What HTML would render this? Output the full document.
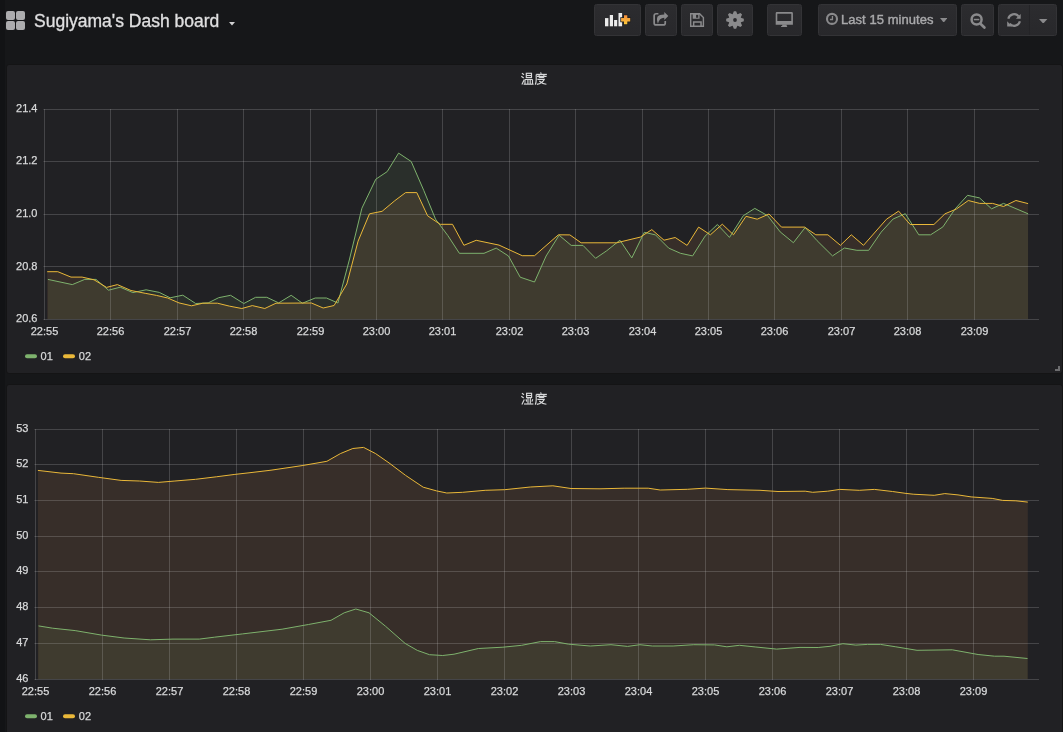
<!DOCTYPE html>
<html><head><meta charset="utf-8"><title>Sugiyama's Dash board</title>
<style>
html,body{margin:0;padding:0;}
body{width:1063px;height:732px;overflow:hidden;position:relative;background:#161719;font-family:"Liberation Sans",sans-serif;}
.strip{position:absolute;left:0;top:0;width:5px;height:732px;background:#121315;}
.panel{position:absolute;left:6px;width:1055px;background:#212124;border:1px solid #141415;border-radius:3px;}
.btn{position:absolute;top:4px;height:30px;background:linear-gradient(#2c2c2f,#28282b);border:1px solid #333336;border-radius:2.5px;box-sizing:content-box;}
.title{position:absolute;left:34.3px;top:9.1px;font-size:17.5px;color:#e0e0e1;line-height:24px;white-space:nowrap;-webkit-text-stroke:0.3px #e0e0e1;will-change:transform;}
.tp{position:absolute;left:22px;top:6.5px;font-size:13px;color:#a9a9ab;line-height:16px;white-space:nowrap;-webkit-text-stroke:0.4px #a9a9ab;letter-spacing:0.05px;will-change:transform;}
</style></head><body>
<div class="strip"></div>
<svg width="20" height="20" style="position:absolute;left:6px;top:11px">
<rect x="0" y="0" width="9" height="9" rx="2" fill="#acacae"/>
<rect x="10" y="0" width="9" height="9" rx="2" fill="#acacae"/>
<rect x="0" y="10" width="9" height="9" rx="2" fill="#acacae"/>
<rect x="10" y="10" width="9" height="9" rx="2" fill="#acacae"/>
</svg>
<div class="title">Sugiyama's Dash board</div>
<svg width="6" height="3.6" style="position:absolute;left:229.2px;top:22px"><path d="M0,0 H6 L3.0,3.6 Z" fill="#d0d0d2"/></svg>
<div class="btn" style="left:594px;width:45px;"><svg width="47" height="32" style="position:absolute;left:0;top:0">
<defs><linearGradient id="og" x1="0" y1="0" x2="0" y2="1"><stop offset="0" stop-color="#f38b3b"/><stop offset="1" stop-color="#fbc93a"/></linearGradient></defs>
<rect x="10" y="13.1" width="3.4" height="8.2" fill="#ececec"/>
<rect x="14.8" y="10" width="3.2" height="11.3" fill="#ececec"/>
<rect x="19.1" y="15" width="3.1" height="6.3" fill="#ececec"/>
<rect x="23.5" y="8" width="3.6" height="13.3" fill="#ececec"/>
<path d="M25.3,12.3 h2.9 v-2.9 h4.9 v2.9 h2.9 v4.9 h-2.9 v2.9 h-4.9 v-2.9 h-2.9z" fill="#1f1f21"/>
<path d="M26.1,13.1 h2.9 v-2.9 h3.3 v2.9 h2.9 v3.3 h-2.9 v2.9 h-3.3 v-2.9 h-2.9z" fill="url(#og)"/>
</svg></div>
<div class="btn" style="left:645px;width:30px;"><svg width="32" height="32" style="position:absolute;left:0;top:0">
<path d="M12.4,8.75 H10.2 Q8.15,8.75 8.15,10.8 V17.9 Q8.15,19.95 10.2,19.95 H17.2 Q19.25,19.95 19.25,17.9 V15.9" fill="none" stroke="#8a8a8c" stroke-width="1.7"/>
<path d="M18.3,7.1 L22.3,11.1 L18.3,14.9 V12.7 Q13.4,12.6 11.9,18.7 Q10.2,14.2 11.6,11.6 Q13.2,9.6 18.3,9.6 Z" fill="#8a8a8c"/>
</svg></div>
<div class="btn" style="left:681px;width:30px;"><svg width="32" height="32" style="position:absolute;left:0;top:0">
<path d="M8.7,8.7 H17.6 L21.4,12.5 V21.2 H8.7 Z" fill="none" stroke="#8a8a8c" stroke-width="1.4"/>
<path d="M10.7,9.1 H17.6 V13.7 H10.7 Z M14.1,9.8 V12.7 H16.2 V9.8 Z" fill="#8a8a8c" fill-rule="evenodd"/>
<path d="M11.65,21 V16.95 H19.05 V21" fill="none" stroke="#8a8a8c" stroke-width="1.5"/>
</svg></div>
<div class="btn" style="left:717px;width:34px;"><svg width="36" height="32" style="position:absolute;left:0;top:0">
<path d="M14.75,9.01 L15.85,6.18 L18.15,6.18 L19.25,9.01 L19.64,9.17 L22.42,7.94 L24.06,9.58 L22.83,12.36 L22.99,12.75 L25.82,13.85 L25.82,16.15 L22.99,17.25 L22.83,17.64 L24.06,20.42 L22.42,22.06 L19.64,20.83 L19.25,20.99 L18.15,23.82 L15.85,23.82 L14.75,20.99 L14.36,20.83 L11.58,22.06 L9.94,20.42 L11.17,17.64 L11.01,17.25 L8.18,16.15 L8.18,13.85 L11.01,12.75 L11.17,12.36 L9.94,9.58 L11.58,7.94 L14.36,9.17 Z" fill="#8a8a8c"/>
<circle cx="17.0" cy="15.0" r="1.9" fill="#2b2b2e"/>
</svg></div>
<div class="btn" style="left:767px;width:33px;"><svg width="35" height="32" style="position:absolute;left:0;top:0">
<path d="M7.7,8.2 Q7.7,7 8.9,7 H23.7 Q24.9,7 24.9,8.2 V19.75 H7.7 Z M9.3,8.7 V16 H23.3 V8.7 Z" fill="#8a8a8c" fill-rule="evenodd"/>
<rect x="14.2" y="19.5" width="4.5" height="1.6" fill="#8a8a8c"/>
<rect x="13" y="21" width="6.2" height="1.1" rx="0.4" fill="#8a8a8c"/>
</svg></div>
<div class="btn" style="left:818px;width:137px;"><svg width="20" height="30" style="position:absolute;left:0;top:0">
<circle cx="13" cy="13.9" r="5" fill="none" stroke="#8a8a8c" stroke-width="2.1"/>
<path d="M13.45,11.1 V14.5 H10.9" fill="none" stroke="#8a8a8c" stroke-width="1.3"/>
</svg><div class="tp">Last 15 minutes</div><svg width="7.4" height="4.6" style="position:absolute;left:121px;top:12.5px"><path d="M0,0 H7.4 L3.7,4.6 Z" fill="#8a8a8c"/></svg></div>
<div class="btn" style="left:961px;width:31px;"><svg width="33" height="32" style="position:absolute;left:0;top:0">
<circle cx="14.6" cy="14.5" r="5.0" fill="none" stroke="#8a8a8c" stroke-width="2.5"/>
<rect x="11.8" y="13.8" width="5.5" height="1.5" fill="#8a8a8c"/>
<path d="M19,19.3 L22.4,22.5" stroke="#8a8a8c" stroke-width="2.7" stroke-linecap="round"/>
</svg></div>
<div class="btn" style="left:998px;width:57px;"><svg width="31" height="32" style="position:absolute;left:0;top:0">
<path d="M9.3,13.7 A5.9,5.9 0 0 1 19.6,11.4" fill="none" stroke="#8a8a8c" stroke-width="2.2"/>
<path d="M21.7,8.9 V13.7 H16.9 Z" fill="#8a8a8c"/>
<path d="M20.9,16.2 A5.9,5.9 0 0 1 10.6,18.6" fill="none" stroke="#8a8a8c" stroke-width="2.2"/>
<path d="M8.2,16.2 V21.4 H13 Z" fill="#8a8a8c"/>
</svg><div style="position:absolute;left:30px;top:0;width:1px;height:30px;background:#242427"></div><svg width="8.4" height="4.6" style="position:absolute;left:40.3px;top:13.6px"><path d="M0,0 H8.4 L4.2,4.6 Z" fill="#8a8a8c"/></svg></div>
<div class="panel" style="top:64px;height:308px;"></div>
<div class="panel" style="top:384px;height:400px;"></div>
<svg width="1063" height="732" viewBox="0 0 1063 732" style="position:absolute;left:0;top:0;will-change:transform">
<style>.t{font-family:"Liberation Sans",sans-serif;font-size:11px;fill:#d8d9da;stroke:#d8d9da;stroke-width:0.25px}</style>
<path d="M47.9,319 L47.9,279.4 L72.3,284.6 L84.8,279.4 L96.0,279.4 L108.5,290.2 L120.2,287.2 L132.9,292.6 L146.1,289.8 L159.3,292.4 L170.1,297.8 L182.8,295.2 L195.7,303.5 L208.2,302.9 L218.7,297.7 L230.6,295.3 L243.8,303.5 L255.6,297.3 L266.8,297.3 L278.7,302.9 L291.2,295.3 L302.4,303.2 L315.2,298.0 L326.5,298.0 L337.9,303.0 L349.3,260.0 L361.9,208.2 L375.8,179.2 L387.2,171.6 L398.6,153.1 L411.2,161.5 L423.8,190.5 L435.5,219.1 L447.8,235.5 L459.4,253.3 L484.0,253.3 L496.2,248.1 L508.5,256.0 L520.2,277.2 L534.5,282.0 L546.1,256.0 L559.1,235.2 L571.2,245.4 L583.0,245.4 L595.6,258.3 L606.8,250.7 L619.9,240.2 L631.8,257.9 L644.3,232.3 L655.5,234.9 L668.7,248.1 L680.5,253.3 L692.6,255.9 L705.1,236.1 L717.4,224.5 L729.5,237.4 L743.3,215.7 L754.8,208.4 L767.7,215.7 L780.2,231.9 L793.4,242.7 L805.2,227.5 L817.1,240.7 L832.5,255.9 L844.4,248.0 L856.9,250.3 L868.7,250.3 L881.2,232.1 L893.1,219.0 L905.3,213.7 L918.8,234.8 L930.6,234.8 L942.9,226.9 L954.8,209.3 L967.5,195.3 L979.5,197.9 L991.6,208.8 L1003.5,203.4 L1028.1,213.8 L1028.1,319 Z" fill="#7EB26D" fill-opacity="0.1"/>
<path d="M47.2,319 L47.2,271.7 L57.8,271.7 L71.0,277.1 L82.1,277.1 L94.0,279.8 L106.6,287.4 L117.4,284.6 L131.0,290.5 L145.2,293.3 L156.4,295.4 L167.7,298.0 L179.0,302.9 L191.5,305.8 L202.9,303.2 L217.4,303.2 L229.3,306.1 L241.8,308.5 L252.3,305.6 L264.8,308.5 L276.0,303.2 L311.4,303.0 L323.2,308.0 L334.1,305.5 L346.8,284.0 L358.1,241.1 L369.5,213.8 L382.1,211.3 L394.8,200.7 L405.6,192.6 L416.8,192.6 L427.6,215.8 L440.2,224.3 L452.5,224.3 L463.9,245.3 L476.2,240.3 L499.0,245.1 L522.2,255.7 L534.5,255.7 L558.4,234.8 L569.9,234.9 L581.1,242.8 L616.6,242.8 L640.3,237.1 L651.8,229.6 L664.0,240.2 L675.2,237.5 L687.1,245.4 L698.6,227.1 L710.4,234.8 L722.3,224.2 L733.5,234.8 L746.0,216.3 L757.2,219.2 L769.0,214.0 L781.5,227.1 L804.6,227.1 L815.8,234.8 L827.9,234.8 L840.4,245.3 L851.3,234.8 L863.5,245.3 L886.5,219.2 L898.6,211.1 L910.2,224.5 L933.9,224.5 L945.0,213.8 L956.4,209.0 L968.3,200.5 L979.7,203.4 L992.6,203.4 L1003.5,206.5 L1015.9,200.5 L1028.1,203.6 L1028.1,319 Z" fill="rgb(253,163,86)" fill-opacity="0.1"/>
<line x1="43.5" y1="109.5" x2="1039" y2="109.5" stroke="rgba(200,200,200,0.22)" stroke-width="1"/>
<line x1="43.5" y1="161.5" x2="1039" y2="161.5" stroke="rgba(200,200,200,0.22)" stroke-width="1"/>
<line x1="43.5" y1="214.5" x2="1039" y2="214.5" stroke="rgba(200,200,200,0.22)" stroke-width="1"/>
<line x1="43.5" y1="266.5" x2="1039" y2="266.5" stroke="rgba(200,200,200,0.22)" stroke-width="1"/>
<line x1="43.5" y1="319.5" x2="1039" y2="319.5" stroke="rgba(200,200,200,0.22)" stroke-width="1"/>
<line x1="44.5" y1="109" x2="44.5" y2="320" stroke="rgba(200,200,200,0.22)" stroke-width="1"/>
<line x1="110.5" y1="109" x2="110.5" y2="320" stroke="rgba(200,200,200,0.22)" stroke-width="1"/>
<line x1="177.5" y1="109" x2="177.5" y2="320" stroke="rgba(200,200,200,0.22)" stroke-width="1"/>
<line x1="243.5" y1="109" x2="243.5" y2="320" stroke="rgba(200,200,200,0.22)" stroke-width="1"/>
<line x1="310.5" y1="109" x2="310.5" y2="320" stroke="rgba(200,200,200,0.22)" stroke-width="1"/>
<line x1="376.5" y1="109" x2="376.5" y2="320" stroke="rgba(200,200,200,0.22)" stroke-width="1"/>
<line x1="442.5" y1="109" x2="442.5" y2="320" stroke="rgba(200,200,200,0.22)" stroke-width="1"/>
<line x1="509.5" y1="109" x2="509.5" y2="320" stroke="rgba(200,200,200,0.22)" stroke-width="1"/>
<line x1="575.5" y1="109" x2="575.5" y2="320" stroke="rgba(200,200,200,0.22)" stroke-width="1"/>
<line x1="642.5" y1="109" x2="642.5" y2="320" stroke="rgba(200,200,200,0.22)" stroke-width="1"/>
<line x1="708.5" y1="109" x2="708.5" y2="320" stroke="rgba(200,200,200,0.22)" stroke-width="1"/>
<line x1="774.5" y1="109" x2="774.5" y2="320" stroke="rgba(200,200,200,0.22)" stroke-width="1"/>
<line x1="841.5" y1="109" x2="841.5" y2="320" stroke="rgba(200,200,200,0.22)" stroke-width="1"/>
<line x1="907.5" y1="109" x2="907.5" y2="320" stroke="rgba(200,200,200,0.22)" stroke-width="1"/>
<line x1="974.5" y1="109" x2="974.5" y2="320" stroke="rgba(200,200,200,0.22)" stroke-width="1"/>
<polyline points="47.9,279.4 72.3,284.6 84.8,279.4 96.0,279.4 108.5,290.2 120.2,287.2 132.9,292.6 146.1,289.8 159.3,292.4 170.1,297.8 182.8,295.2 195.7,303.5 208.2,302.9 218.7,297.7 230.6,295.3 243.8,303.5 255.6,297.3 266.8,297.3 278.7,302.9 291.2,295.3 302.4,303.2 315.2,298.0 326.5,298.0 337.9,303.0 349.3,260.0 361.9,208.2 375.8,179.2 387.2,171.6 398.6,153.1 411.2,161.5 423.8,190.5 435.5,219.1 447.8,235.5 459.4,253.3 484.0,253.3 496.2,248.1 508.5,256.0 520.2,277.2 534.5,282.0 546.1,256.0 559.1,235.2 571.2,245.4 583.0,245.4 595.6,258.3 606.8,250.7 619.9,240.2 631.8,257.9 644.3,232.3 655.5,234.9 668.7,248.1 680.5,253.3 692.6,255.9 705.1,236.1 717.4,224.5 729.5,237.4 743.3,215.7 754.8,208.4 767.7,215.7 780.2,231.9 793.4,242.7 805.2,227.5 817.1,240.7 832.5,255.9 844.4,248.0 856.9,250.3 868.7,250.3 881.2,232.1 893.1,219.0 905.3,213.7 918.8,234.8 930.6,234.8 942.9,226.9 954.8,209.3 967.5,195.3 979.5,197.9 991.6,208.8 1003.5,203.4 1028.1,213.8" fill="none" stroke="#7EB26D" stroke-width="1" stroke-linejoin="round"/>
<polyline points="47.2,271.7 57.8,271.7 71.0,277.1 82.1,277.1 94.0,279.8 106.6,287.4 117.4,284.6 131.0,290.5 145.2,293.3 156.4,295.4 167.7,298.0 179.0,302.9 191.5,305.8 202.9,303.2 217.4,303.2 229.3,306.1 241.8,308.5 252.3,305.6 264.8,308.5 276.0,303.2 311.4,303.0 323.2,308.0 334.1,305.5 346.8,284.0 358.1,241.1 369.5,213.8 382.1,211.3 394.8,200.7 405.6,192.6 416.8,192.6 427.6,215.8 440.2,224.3 452.5,224.3 463.9,245.3 476.2,240.3 499.0,245.1 522.2,255.7 534.5,255.7 558.4,234.8 569.9,234.9 581.1,242.8 616.6,242.8 640.3,237.1 651.8,229.6 664.0,240.2 675.2,237.5 687.1,245.4 698.6,227.1 710.4,234.8 722.3,224.2 733.5,234.8 746.0,216.3 757.2,219.2 769.0,214.0 781.5,227.1 804.6,227.1 815.8,234.8 827.9,234.8 840.4,245.3 851.3,234.8 863.5,245.3 886.5,219.2 898.6,211.1 910.2,224.5 933.9,224.5 945.0,213.8 956.4,209.0 968.3,200.5 979.7,203.4 992.6,203.4 1003.5,206.5 1015.9,200.5 1028.1,203.6" fill="none" stroke="#EAB839" stroke-width="1" stroke-linejoin="round"/>
<text x="37.5" y="112" text-anchor="end" class="t">21.4</text>
<text x="37.5" y="164" text-anchor="end" class="t">21.2</text>
<text x="37.5" y="217" text-anchor="end" class="t">21.0</text>
<text x="37.5" y="270" text-anchor="end" class="t">20.8</text>
<text x="37.5" y="322" text-anchor="end" class="t">20.6</text>
<text x="44.50" y="335.2" text-anchor="middle" class="t">22:55</text>
<text x="110.50" y="335.2" text-anchor="middle" class="t">22:56</text>
<text x="177.50" y="335.2" text-anchor="middle" class="t">22:57</text>
<text x="243.50" y="335.2" text-anchor="middle" class="t">22:58</text>
<text x="310.50" y="335.2" text-anchor="middle" class="t">22:59</text>
<text x="376.50" y="335.2" text-anchor="middle" class="t">23:00</text>
<text x="442.50" y="335.2" text-anchor="middle" class="t">23:01</text>
<text x="509.50" y="335.2" text-anchor="middle" class="t">23:02</text>
<text x="575.50" y="335.2" text-anchor="middle" class="t">23:03</text>
<text x="642.50" y="335.2" text-anchor="middle" class="t">23:04</text>
<text x="708.50" y="335.2" text-anchor="middle" class="t">23:05</text>
<text x="774.50" y="335.2" text-anchor="middle" class="t">23:06</text>
<text x="841.50" y="335.2" text-anchor="middle" class="t">23:07</text>
<text x="907.50" y="335.2" text-anchor="middle" class="t">23:08</text>
<text x="974.50" y="335.2" text-anchor="middle" class="t">23:09</text>
<rect x="25" y="354.2" width="12" height="4" rx="2" fill="#7EB26D"/>
<text x="40.6" y="359.8" class="t">01</text>
<rect x="63" y="354.2" width="12" height="4" rx="2" fill="#EAB839"/>
<text x="78.8" y="359.8" class="t">02</text>
<path d="M38.5,679 L38.5,625.9 L52.6,628.2 L75.2,630.6 L101.5,635.1 L124.1,638.0 L150.4,639.8 L173.0,639.1 L199.3,639.1 L214.4,637.2 L242.6,633.9 L282.1,629.2 L308.4,624.5 L331.0,620.3 L344.2,612.8 L355.8,609.0 L369.0,612.8 L385.6,626.3 L405.1,643.4 L417.3,650.4 L429.5,654.7 L442.7,655.5 L454.0,654.2 L478.4,648.5 L502.9,647.2 L521.7,645.3 L540.5,641.6 L554.6,641.6 L568.7,644.2 L590.3,646.0 L611.0,644.7 L627.6,646.4 L640.0,644.7 L652.4,646.0 L673.1,646.0 L693.8,644.7 L714.5,644.9 L726.9,646.8 L739.4,645.3 L755.9,647.0 L776.6,649.1 L800.0,647.4 L818.2,647.5 L830.0,646.3 L842.9,643.7 L855.9,645.1 L867.6,644.4 L880.5,644.4 L895.8,646.8 L917.0,650.3 L952.3,649.8 L978.1,654.5 L994.6,656.2 L1004.0,656.2 L1027.5,658.5 L1027.5,679 Z" fill="#7EB26D" fill-opacity="0.1"/>
<path d="M37.9,679 L37.9,470.4 L61.0,473.1 L73.5,473.7 L98.3,477.3 L121.1,480.4 L139.7,481.0 L158.3,482.4 L174.9,481.0 L195.6,479.3 L216.3,476.8 L234.9,474.4 L250.0,472.7 L271.0,470.2 L302.1,465.6 L326.9,461.3 L340.4,453.6 L352.8,448.5 L363.6,447.4 L375.6,453.6 L389.0,462.9 L405.6,475.4 L423.2,487.2 L436.6,490.9 L446.8,493.0 L462.6,492.3 L485.2,490.3 L504.7,489.7 L530.3,487.0 L552.9,485.8 L571.0,488.5 L600.0,488.8 L624.1,488.2 L648.2,488.2 L660.2,490.0 L687.3,489.3 L705.4,488.1 L727.9,489.6 L760.0,490.3 L778.0,491.5 L805.2,491.2 L812.7,492.3 L827.7,491.2 L839.8,489.4 L859.3,490.3 L874.4,489.4 L892.5,491.5 L906.0,493.4 L913.2,494.2 L934.2,495.3 L944.8,493.6 L958.0,494.9 L971.1,496.9 L992.2,498.4 L1002.7,500.4 L1015.9,500.8 L1027.8,502.1 L1027.8,679 Z" fill="rgb(253,163,86)" fill-opacity="0.1"/>
<line x1="34.5" y1="429.5" x2="1039" y2="429.5" stroke="rgba(200,200,200,0.22)" stroke-width="1"/>
<line x1="34.5" y1="464.5" x2="1039" y2="464.5" stroke="rgba(200,200,200,0.22)" stroke-width="1"/>
<line x1="34.5" y1="500.5" x2="1039" y2="500.5" stroke="rgba(200,200,200,0.22)" stroke-width="1"/>
<line x1="34.5" y1="536.5" x2="1039" y2="536.5" stroke="rgba(200,200,200,0.22)" stroke-width="1"/>
<line x1="34.5" y1="571.5" x2="1039" y2="571.5" stroke="rgba(200,200,200,0.22)" stroke-width="1"/>
<line x1="34.5" y1="607.5" x2="1039" y2="607.5" stroke="rgba(200,200,200,0.22)" stroke-width="1"/>
<line x1="34.5" y1="643.5" x2="1039" y2="643.5" stroke="rgba(200,200,200,0.22)" stroke-width="1"/>
<line x1="34.5" y1="679.5" x2="1039" y2="679.5" stroke="rgba(200,200,200,0.22)" stroke-width="1"/>
<line x1="35.5" y1="429" x2="35.5" y2="680" stroke="rgba(200,200,200,0.22)" stroke-width="1"/>
<line x1="102.5" y1="429" x2="102.5" y2="680" stroke="rgba(200,200,200,0.22)" stroke-width="1"/>
<line x1="169.5" y1="429" x2="169.5" y2="680" stroke="rgba(200,200,200,0.22)" stroke-width="1"/>
<line x1="236.5" y1="429" x2="236.5" y2="680" stroke="rgba(200,200,200,0.22)" stroke-width="1"/>
<line x1="303.5" y1="429" x2="303.5" y2="680" stroke="rgba(200,200,200,0.22)" stroke-width="1"/>
<line x1="370.5" y1="429" x2="370.5" y2="680" stroke="rgba(200,200,200,0.22)" stroke-width="1"/>
<line x1="437.5" y1="429" x2="437.5" y2="680" stroke="rgba(200,200,200,0.22)" stroke-width="1"/>
<line x1="504.5" y1="429" x2="504.5" y2="680" stroke="rgba(200,200,200,0.22)" stroke-width="1"/>
<line x1="571.5" y1="429" x2="571.5" y2="680" stroke="rgba(200,200,200,0.22)" stroke-width="1"/>
<line x1="638.5" y1="429" x2="638.5" y2="680" stroke="rgba(200,200,200,0.22)" stroke-width="1"/>
<line x1="705.5" y1="429" x2="705.5" y2="680" stroke="rgba(200,200,200,0.22)" stroke-width="1"/>
<line x1="772.5" y1="429" x2="772.5" y2="680" stroke="rgba(200,200,200,0.22)" stroke-width="1"/>
<line x1="839.5" y1="429" x2="839.5" y2="680" stroke="rgba(200,200,200,0.22)" stroke-width="1"/>
<line x1="906.5" y1="429" x2="906.5" y2="680" stroke="rgba(200,200,200,0.22)" stroke-width="1"/>
<line x1="973.5" y1="429" x2="973.5" y2="680" stroke="rgba(200,200,200,0.22)" stroke-width="1"/>
<polyline points="38.5,625.9 52.6,628.2 75.2,630.6 101.5,635.1 124.1,638.0 150.4,639.8 173.0,639.1 199.3,639.1 214.4,637.2 242.6,633.9 282.1,629.2 308.4,624.5 331.0,620.3 344.2,612.8 355.8,609.0 369.0,612.8 385.6,626.3 405.1,643.4 417.3,650.4 429.5,654.7 442.7,655.5 454.0,654.2 478.4,648.5 502.9,647.2 521.7,645.3 540.5,641.6 554.6,641.6 568.7,644.2 590.3,646.0 611.0,644.7 627.6,646.4 640.0,644.7 652.4,646.0 673.1,646.0 693.8,644.7 714.5,644.9 726.9,646.8 739.4,645.3 755.9,647.0 776.6,649.1 800.0,647.4 818.2,647.5 830.0,646.3 842.9,643.7 855.9,645.1 867.6,644.4 880.5,644.4 895.8,646.8 917.0,650.3 952.3,649.8 978.1,654.5 994.6,656.2 1004.0,656.2 1027.5,658.5" fill="none" stroke="#7EB26D" stroke-width="1" stroke-linejoin="round"/>
<polyline points="37.9,470.4 61.0,473.1 73.5,473.7 98.3,477.3 121.1,480.4 139.7,481.0 158.3,482.4 174.9,481.0 195.6,479.3 216.3,476.8 234.9,474.4 250.0,472.7 271.0,470.2 302.1,465.6 326.9,461.3 340.4,453.6 352.8,448.5 363.6,447.4 375.6,453.6 389.0,462.9 405.6,475.4 423.2,487.2 436.6,490.9 446.8,493.0 462.6,492.3 485.2,490.3 504.7,489.7 530.3,487.0 552.9,485.8 571.0,488.5 600.0,488.8 624.1,488.2 648.2,488.2 660.2,490.0 687.3,489.3 705.4,488.1 727.9,489.6 760.0,490.3 778.0,491.5 805.2,491.2 812.7,492.3 827.7,491.2 839.8,489.4 859.3,490.3 874.4,489.4 892.5,491.5 906.0,493.4 913.2,494.2 934.2,495.3 944.8,493.6 958.0,494.9 971.1,496.9 992.2,498.4 1002.7,500.4 1015.9,500.8 1027.8,502.1" fill="none" stroke="#EAB839" stroke-width="1" stroke-linejoin="round"/>
<text x="28.5" y="432" text-anchor="end" class="t">53</text>
<text x="28.5" y="467" text-anchor="end" class="t">52</text>
<text x="28.5" y="503" text-anchor="end" class="t">51</text>
<text x="28.5" y="539" text-anchor="end" class="t">50</text>
<text x="28.5" y="574" text-anchor="end" class="t">49</text>
<text x="28.5" y="610" text-anchor="end" class="t">48</text>
<text x="28.5" y="646" text-anchor="end" class="t">47</text>
<text x="28.5" y="682" text-anchor="end" class="t">46</text>
<text x="35.50" y="694.8" text-anchor="middle" class="t">22:55</text>
<text x="102.50" y="694.8" text-anchor="middle" class="t">22:56</text>
<text x="169.50" y="694.8" text-anchor="middle" class="t">22:57</text>
<text x="236.50" y="694.8" text-anchor="middle" class="t">22:58</text>
<text x="303.50" y="694.8" text-anchor="middle" class="t">22:59</text>
<text x="370.50" y="694.8" text-anchor="middle" class="t">23:00</text>
<text x="437.50" y="694.8" text-anchor="middle" class="t">23:01</text>
<text x="504.50" y="694.8" text-anchor="middle" class="t">23:02</text>
<text x="571.50" y="694.8" text-anchor="middle" class="t">23:03</text>
<text x="638.50" y="694.8" text-anchor="middle" class="t">23:04</text>
<text x="705.50" y="694.8" text-anchor="middle" class="t">23:05</text>
<text x="772.50" y="694.8" text-anchor="middle" class="t">23:06</text>
<text x="839.50" y="694.8" text-anchor="middle" class="t">23:07</text>
<text x="906.50" y="694.8" text-anchor="middle" class="t">23:08</text>
<text x="973.50" y="694.8" text-anchor="middle" class="t">23:09</text>
<rect x="25" y="714.2" width="12" height="4" rx="2" fill="#7EB26D"/>
<text x="40.6" y="719.8" class="t">01</text>
<rect x="63" y="714.2" width="12" height="4" rx="2" fill="#EAB839"/>
<text x="78.8" y="719.8" class="t">02</text>
<g transform="translate(518,69)" stroke="#d8d9da" stroke-width="1.15" fill="none" stroke-linecap="butt">
<path d="M3.9,4.2 L6,5.7"/>
<path d="M3.3,7.2 L5.7,9"/>
<path d="M3.9,15.4 L6.3,10.5"/>
<rect x="8.3" y="4.3" width="5.2" height="4.3"/>
<path d="M8.3,6.5 H13.5"/>
<path d="M7,10.5 H14.5 M7,10.5 V15 M9.9,10.5 V15 M12.2,10.5 V15 M14.5,10.5 V15"/>
<path d="M5.6,15.2 H15.6"/>
<path d="M22.6,3.4 L23.2,4.9"/>
<path d="M18.2,5.4 H28.9"/>
<path d="M18.2,5.4 V11 Q18.2,14 17.2,15.6"/>
<path d="M19,7.3 H28.6 M21.1,6 V8.6 M25.9,6 V8.6 M21.1,8.5 H25.9"/>
<path d="M19.4,10.4 H26.2 Q24.5,14 18.8,15.4"/>
<path d="M21.3,12 Q24,14.6 28.4,15.3"/>
</g>
<g transform="translate(518,389)" stroke="#d8d9da" stroke-width="1.15" fill="none" stroke-linecap="butt">
<path d="M3.9,4.2 L6,5.7"/>
<path d="M3.3,7.2 L5.7,9"/>
<path d="M3.9,15.4 L6.3,10.5"/>
<rect x="8.6" y="4.3" width="5.0" height="4.3"/>
<path d="M8.6,6.5 H13.6"/>
<path d="M10,9 V14.8 M12.3,9 V14.8"/>
<path d="M8,10.2 L8.8,12.6 M14.8,10.2 L13.9,12.6"/>
<path d="M6,15 H15.4"/>
<path d="M22.6,3.4 L23.2,4.9"/>
<path d="M18.2,5.4 H28.9"/>
<path d="M18.2,5.4 V11 Q18.2,14 17.2,15.6"/>
<path d="M19,7.3 H28.6 M21.1,6 V8.6 M25.9,6 V8.6 M21.1,8.5 H25.9"/>
<path d="M19.4,10.4 H26.2 Q24.5,14 18.8,15.4"/>
<path d="M21.3,12 Q24,14.6 28.4,15.3"/>
</g>
<path d="M1058,366 H1060 V371 H1055 V369 H1058 Z" fill="#6c6c6e"/>
</svg>
</body></html>
